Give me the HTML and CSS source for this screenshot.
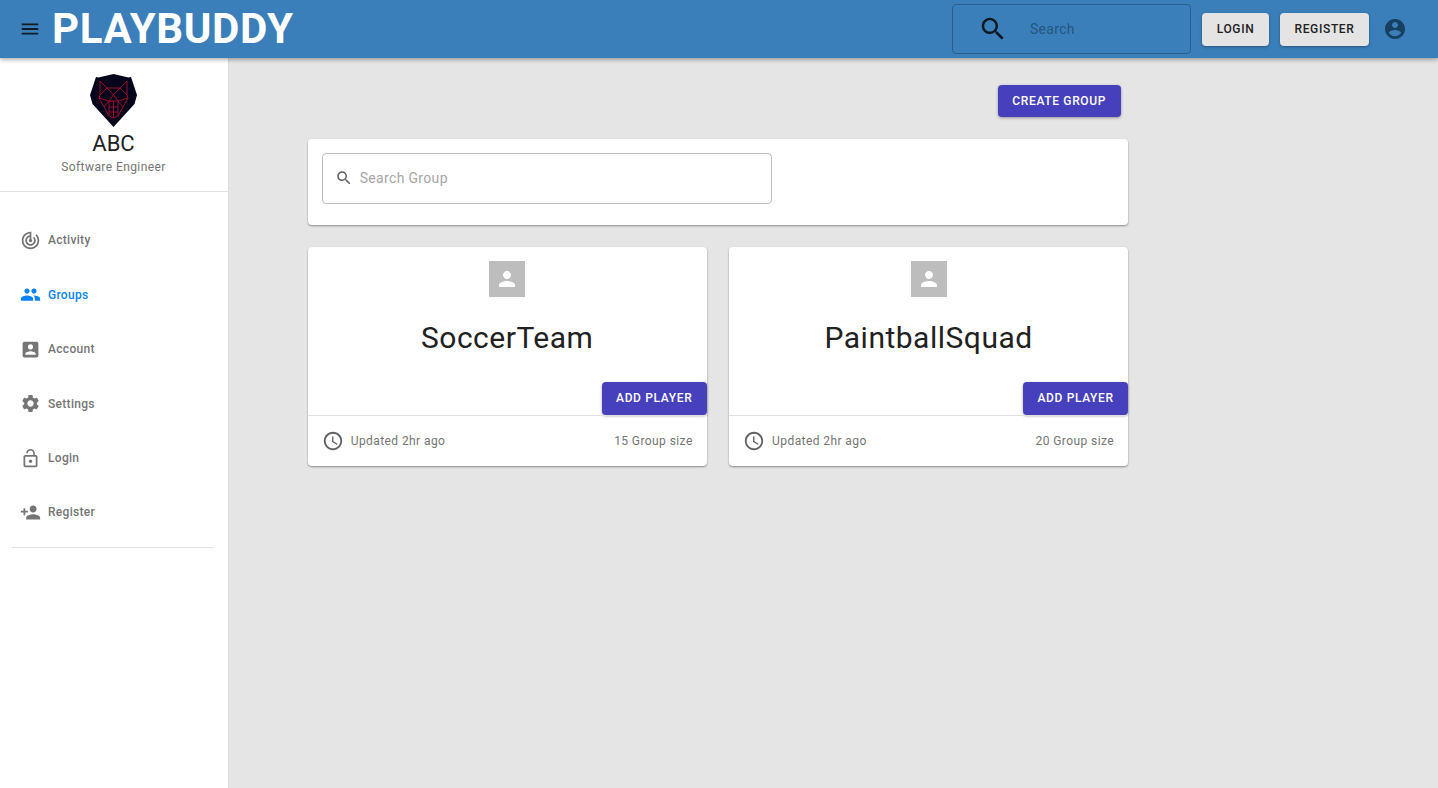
FILE: index.html
```html
<!DOCTYPE html>
<html lang="en">
<head>
<meta charset="utf-8">
<title>PlayBuddy</title>
<link rel="stylesheet" href="styles.css">
</head>
<body>
<svg class="defs" width="0" height="0" aria-hidden="true">
  <symbol id="i-menu" viewBox="0 0 24 24"><path d="M3 18h18v-2H3v2zm0-5h18v-2H3v2zm0-7v2h18V6H3z"/></symbol>
  <symbol id="i-search" viewBox="0 0 24 24"><path d="M15.5 14h-.79l-.28-.27C15.41 12.59 16 11.11 16 9.5 16 5.91 13.09 3 9.5 3S3 5.91 3 9.5 5.91 16 9.5 16c1.61 0 3.09-.59 4.23-1.57l.27.28v.79l5 4.99L20.49 19l-4.99-5zm-6 0C7.01 14 5 11.99 5 9.5S7.01 5 9.5 5 14 7.01 14 9.5 11.99 14 9.5 14z"/></symbol>
  <symbol id="i-account" viewBox="0 0 24 24"><path d="M12 2C6.48 2 2 6.48 2 12s4.48 10 10 10 10-4.48 10-10S17.52 2 12 2zm0 3c1.66 0 3 1.34 3 3s-1.34 3-3 3-3-1.34-3-3 1.34-3 3-3zm0 14.2c-2.5 0-4.71-1.28-6-3.22.03-1.99 4-3.08 6-3.08 1.99 0 5.97 1.09 6 3.08-1.29 1.94-3.5 3.22-6 3.22z"/></symbol>
  <symbol id="i-track" viewBox="0 0 24 24"><path d="M19.07 4.93l-1.41 1.41C19.1 7.79 20 9.79 20 12c0 4.42-3.58 8-8 8s-8-3.58-8-8c0-4.08 3.05-7.44 7-7.93v2.02C8.16 6.57 6 9.03 6 12c0 3.31 2.69 6 6 6s6-2.69 6-6c0-1.66-.67-3.16-1.76-4.24l-1.41 1.41C15.55 9.9 16 10.9 16 12c0 2.21-1.79 4-4 4s-4-1.79-4-4c0-1.86 1.28-3.41 3-3.86v2.14c-.6.35-1 .98-1 1.72 0 1.1.9 2 2 2s2-.9 2-2c0-.74-.4-1.38-1-1.72V2h-1C6.48 2 2 6.48 2 12s4.48 10 10 10 10-4.48 10-10c0-2.76-1.12-5.26-2.93-7.07z"/></symbol>
  <symbol id="i-people" viewBox="0 0 24 24"><path d="M16 11c1.66 0 2.99-1.34 2.99-3S17.66 5 16 5c-1.66 0-3 1.34-3 3s1.34 3 3 3zm-8 0c1.66 0 2.99-1.34 2.99-3S9.66 5 8 5C6.34 5 5 6.34 5 8s1.34 3 3 3zm0 2c-2.33 0-7 1.17-7 3.5V19h14v-2.5c0-2.33-4.67-3.5-7-3.5zm8 0c-.29 0-.62.02-.97.05 1.16.84 1.97 1.97 1.97 3.45V19h6v-2.5c0-2.33-4.67-3.5-7-3.5z"/></symbol>
  <symbol id="i-box" viewBox="0 0 24 24"><path d="M3 5v14c0 1.1.89 2 2 2h14c1.1 0 2-.9 2-2V5c0-1.1-.9-2-2-2H5c-1.11 0-2 .9-2 2zm12 4c0 1.66-1.34 3-3 3s-3-1.34-3-3 1.34-3 3-3 3 1.34 3 3zm-9 8c0-2 4-3.1 6-3.1s6 1.1 6 3.1v1H6v-1z"/></symbol>
  <symbol id="i-settings" viewBox="0 0 24 24"><path d="M19.14 12.94c.04-.3.06-.61.06-.94 0-.32-.02-.64-.07-.94l2.03-1.58c.18-.14.23-.41.12-.61l-1.92-3.32c-.12-.22-.37-.29-.59-.22l-2.39.96c-.5-.38-1.03-.7-1.62-.94l-.36-2.54c-.04-.24-.24-.41-.48-.41h-3.84c-.24 0-.43.17-.47.41l-.36 2.54c-.59.24-1.13.57-1.62.94l-2.39-.96c-.22-.08-.47 0-.59.22L2.74 8.87c-.12.21-.08.47.12.61l2.03 1.58c-.05.3-.09.63-.09.94s.02.64.07.94l-2.03 1.58c-.18.14-.23.41-.12.61l1.92 3.32c.12.22.37.29.59.22l2.39-.96c.5.38 1.03.7 1.62.94l.36 2.54c.05.24.24.41.48.41h3.84c.24 0 .44-.17.47-.41l.36-2.54c.59-.24 1.13-.56 1.62-.94l2.39.96c.22.08.47 0 .59-.22l1.92-3.32c.12-.22.07-.47-.12-.61l-2.01-1.58zM12 15.6c-1.98 0-3.6-1.62-3.6-3.6s1.62-3.6 3.6-3.6 3.6 1.62 3.6 3.6-1.62 3.6-3.6 3.6z"/></symbol>
  <symbol id="i-lock" viewBox="0 0 24 24"><path d="M12 17c1.1 0 2-.9 2-2s-.9-2-2-2-2 .9-2 2 .9 2 2 2zm6-9h-1V6c0-2.76-2.24-5-5-5S7 3.24 7 6h1.9c0-1.71 1.39-3.1 3.1-3.1 1.71 0 3.1 1.39 3.1 3.1v2H6c-1.1 0-2 .9-2 2v10c0 1.1.9 2 2 2h12c1.1 0 2-.9 2-2V10c0-1.1-.9-2-2-2zm0 12H6V10h12v10z"/></symbol>
  <symbol id="i-add" viewBox="0 0 24 24"><path d="M15 12c2.21 0 4-1.79 4-4s-1.79-4-4-4-4 1.79-4 4 1.79 4 4 4zm-9-2V7H4v3H1v2h3v3h2v-3h3v-2H6zm9 4c-2.67 0-8 1.34-8 4v2h16v-2c0-2.66-5.33-4-8-4z"/></symbol>
  <symbol id="i-person" viewBox="0 0 24 24"><path d="M12 12c2.21 0 4-1.79 4-4s-1.79-4-4-4-4 1.79-4 4 1.79 4 4 4zm0 2c-2.67 0-8 1.34-8 4v2h16v-2c0-2.66-5.33-4-8-4z"/></symbol>
  <symbol id="i-clock" viewBox="0 0 24 24"><path d="M11.99 2C6.47 2 2 6.48 2 12s4.47 10 9.99 10C17.52 22 22 17.52 22 12S17.52 2 11.99 2zM12 20c-4.42 0-8-3.58-8-8s3.58-8 8-8 8 3.58 8 8-3.58 8-8 8zm.5-13H11v6l5.25 3.15.75-1.23-4.5-2.67z"/></symbol>
</svg>

<header class="topbar">
  <button class="icon-btn menu-btn" aria-label="Menu"><svg class="ic-menu"><use href="#i-menu"/></svg></button>
  <div class="brand">PLAYBUDDY</div>
  <div class="top-search">
    <svg class="ic-top-search"><use href="#i-search"/></svg>
    <span class="top-search-text">Search</span>
  </div>
  <button class="btn btn-light btn-login">LOGIN</button>
  <button class="btn btn-light btn-register">REGISTER</button>
  <svg class="ic-account"><use href="#i-account"/></svg>
</header>

<div class="shell">
  <aside class="sidebar">
    <div class="profile">
      <svg class="logo" viewBox="0 0 47 53" aria-hidden="true">
        <path class="logo-shield" d="M23.5 0 L38.5 3.5 L41 3 L47 21 L44.5 30 L23.5 53 L2.5 30 L0 21 L6 3 L8.5 3.5Z"/>
        <path class="logo-wolf" d="M10 7 L17 14 H30 L37 7 L37 21 L38 24 L33 33 L28 42 L23.5 44 L19 42 L14 33 L9 24 L10 21 Z M10 21 L17 14 L23.5 21 L30 14 L37 21 M9 24 L19 27 L23.5 21 L28 27 L38 24 M14 33 L19 27 L19 42 M33 33 L28 27 L28 42 M19 33 H28 M23.5 27 V44 M19 38 L28 38 M19 27 H28"/>
      </svg>
      <div class="profile-name">ABC</div>
      <div class="profile-role">Software Engineer</div>
    </div>
    <nav class="nav">
      <a class="nav-item"><svg class="nav-ic"><use href="#i-track"/></svg><span>Activity</span></a>
      <a class="nav-item active"><svg class="nav-ic"><use href="#i-people"/></svg><span>Groups</span></a>
      <a class="nav-item"><svg class="nav-ic"><use href="#i-box"/></svg><span>Account</span></a>
      <a class="nav-item"><svg class="nav-ic"><use href="#i-settings"/></svg><span>Settings</span></a>
      <a class="nav-item"><svg class="nav-ic"><use href="#i-lock"/></svg><span>Login</span></a>
      <a class="nav-item"><svg class="nav-ic"><use href="#i-add"/></svg><span>Register</span></a>
    </nav>
    <div class="nav-rule"></div>
  </aside>

  <main class="main">
    <div class="content">
      <div class="actions"><button class="btn btn-primary btn-create">CREATE GROUP</button></div>
      <section class="card search-card">
        <div class="group-search">
          <svg class="ic-group-search"><use href="#i-search"/></svg>
          <span class="group-search-text">Search Group</span>
        </div>
      </section>
      <div class="groups">
        <article class="card group">
          <div class="avatar"><svg class="ic-person"><use href="#i-person"/></svg></div>
          <h2 class="group-title">SoccerTeam</h2>
          <div class="group-action"><button class="btn btn-primary btn-add">ADD PLAYER</button></div>
          <footer class="group-foot">
            <span class="foot-left"><svg class="ic-clock"><use href="#i-clock"/></svg>Updated 2hr ago</span>
            <span>15 Group size</span>
          </footer>
        </article>
        <article class="card group">
          <div class="avatar"><svg class="ic-person"><use href="#i-person"/></svg></div>
          <h2 class="group-title">PaintballSquad</h2>
          <div class="group-action"><button class="btn btn-primary btn-add">ADD PLAYER</button></div>
          <footer class="group-foot">
            <span class="foot-left"><svg class="ic-clock"><use href="#i-clock"/></svg>Updated 2hr ago</span>
            <span>20 Group size</span>
          </footer>
        </article>
      </div>
    </div>
  </main>
</div>
</body>
</html>
```

FILE: styles.css
```css
* { box-sizing: border-box; }
html, body { margin: 0; height: 100%; overflow: hidden; }
body {
  font-family: Roboto, "Liberation Sans", sans-serif;
  color: #212121;
  background: #e5e5e5;
  display: flex;
  flex-direction: column;
}
.defs { display: block; height: 0; }
svg { display: block; fill: currentColor; flex: none; }

.topbar {
  position: relative;
  z-index: 2;
  flex: none;
  height: 58px;
  background: #3a7fba;
  display: flex;
  align-items: center;
  box-shadow: 0 2px 4px rgba(0, 0, 0, .3);
}
.icon-btn { border: 0; padding: 0; background: none; color: #111c26; }
.menu-btn { margin-left: 19px; width: 22px; height: 22px; }
.ic-menu { width: 22px; height: 22px; }
.brand {
  margin-left: 11px;
  font-size: 42px;
  font-weight: 700;
  letter-spacing: .65px;
  line-height: 58px;
  color: #fff;
  flex: 1;
}
.top-search {
  width: 239px;
  height: 50px;
  border: 1px solid rgba(0, 0, 0, .25);
  border-radius: 4px;
  display: flex;
  align-items: center;
  padding-left: 25px;
}
.ic-top-search { width: 30px; height: 30px; color: #0d1820; }
.top-search-text { margin-left: 22px; font-size: 14px; letter-spacing: .3px; color: #23577f; }

.btn {
  border: 0;
  border-radius: 4px;
  font-family: inherit;
  font-size: 12px;
  font-weight: 500;
  letter-spacing: .65px;
  height: 33px;
  padding: 0 0 2px;
  box-shadow: 0 1px 3px rgba(0, 0, 0, .35);
}
.btn-light { background: #e4e4e4; color: #212121; padding: 0; }
.btn-login { margin-left: 11px; width: 67px; }
.btn-register { margin-left: 11px; width: 89px; }
.ic-account { width: 24px; height: 24px; margin: 0 31px 0 14px; color: #173f5f; }
.btn-primary { background: #4640bc; color: #fff; }

.shell { flex: 1; display: flex; min-height: 0; }
.sidebar {
  flex: none;
  width: 229px;
  background: #fff;
  border-right: 1px solid #dcdcdc;
}
.profile {
  height: 134px;
  padding: 16px 1px 0 0;
  border-bottom: 1px solid #e0e0e0;
  text-align: center;
}
.logo { width: 47px; height: 53px; margin: 0 auto; }
.logo-shield { fill: #05051c; }
.logo-wolf { fill: none; stroke: #a5142a; stroke-width: .9; }
.profile-name { font-size: 22px; line-height: 26px; margin-top: 4px; }
.profile-role { font-size: 12px; line-height: 16px; margin-top: 2px; letter-spacing: .42px; color: #757575; }

.nav { padding-top: 21.3px; }
.nav-item {
  height: 54.4px;
  padding-left: 20px;
  display: flex;
  align-items: center;
  font-size: 12px;
  font-weight: 500;
  letter-spacing: .3px;
  color: #757575;
}
.nav-item.active { color: #0a84f5; }
.nav-ic { width: 21px; height: 21px; margin-right: 7px; }
.nav-rule { height: 1px; margin: 7px 14px 0 12px; background: #e0e0e0; }

.main { flex: 1; padding: 27px 0 0 78.7px; min-width: 0; }
.content { width: 820px; }
.actions { display: flex; justify-content: flex-end; padding-right: 7px; }
.btn-create { height: 32px; width: 123px; padding: 0; }

.card {
  background: #fff;
  border-radius: 4px;
  box-shadow: 0 1px 2px rgba(0, 0, 0, .4);
}
.search-card { margin-top: 22px; height: 86px; padding: 14px; }
.group-search {
  width: 450px;
  height: 51px;
  border: 1px solid #bdbdbd;
  border-radius: 4px;
  display: flex;
  align-items: center;
  padding: 0 0 1px 12px;
}
.ic-group-search { width: 18px; height: 18px; color: #616161; }
.group-search-text { margin-left: 7px; font-size: 14px; letter-spacing: .33px; color: #a6a6a6; padding-bottom: 1px; }

.groups { margin-top: 22px; display: grid; grid-template-columns: 399px 399px; gap: 22.4px; }
.group { height: 219px; padding-top: 14px; display: flex; flex-direction: column; }
.avatar {
  width: 36px;
  height: 36px;
  margin: 0 auto;
  background: #bdbdbd;
  display: flex;
  align-items: center;
  justify-content: center;
  color: #fff;
}
.ic-person { width: 24px; height: 24px; }
.group-title {
  margin: 21px 0 0;
  font-size: 30px;
  font-weight: 400;
  line-height: 40px;
  letter-spacing: .5px;
  text-align: center;
}
.group-action { margin-top: 24px; display: flex; justify-content: flex-end; }
.btn-add { width: 105px; }
.group-foot {
  flex: 1;
  border-top: 1px solid #e0e0e0;
  padding: 0 14px;
  display: flex;
  align-items: center;
  justify-content: space-between;
  font-size: 12px;
  letter-spacing: .42px;
  color: #757575;
}
.foot-left { display: flex; align-items: center; }
.ic-clock { width: 22px; height: 22px; margin-right: 7px; color: #616161; }
```
